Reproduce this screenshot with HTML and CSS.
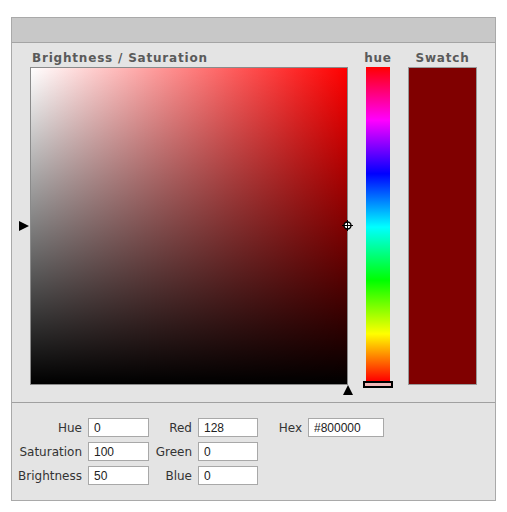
FILE: index.html
```html
<!DOCTYPE html>
<html lang="en">
<head>
    <meta charset="UTF-8">
    <meta name="viewport" content="width=device-width, initial-scale=1.0">
    <title>Color Picker</title>
    <link rel="stylesheet" href="styles.css">
</head>
<body>
    <div class="panel">
        <div class="titlebar"></div>

        <!-- Picker area -->
        <div class="picker">
            <div class="sb-col">
                <div class="col-label sb-label">Brightness / Saturation</div>
                <div class="sb-box">
                    <div class="sb-shade"></div>
                    <span class="arrow-left"></span>
                    <span class="arrow-up"></span>
                    <svg class="sb-marker" width="11" height="11" viewBox="0 0 11 11">
                        <circle cx="5.5" cy="5.5" r="3.5" fill="#fff" stroke="#000" stroke-width="1.4"/>
                        <line x1="5.5" y1="0" x2="5.5" y2="11" stroke="#000" stroke-width="1"/>
                        <line x1="0" y1="5.5" x2="11" y2="5.5" stroke="#000" stroke-width="1"/>
                    </svg>
                </div>
            </div>
            <div class="hue-col">
                <div class="col-label">hue</div>
                <div class="hue-bar">
                    <span class="hue-handle"></span>
                </div>
            </div>
            <div class="swatch-col">
                <div class="col-label">Swatch</div>
                <div class="swatch"></div>
            </div>
        </div>

        <!-- Values -->
        <div class="fields">
            <label>Hue</label><input type="text" value="0">
            <label>Red</label><input type="text" value="128">
            <label>Hex</label><input type="text" value="#800000">

            <label>Saturation</label><input type="text" value="100">
            <label>Green</label><input type="text" value="0">
            <span></span><span></span>

            <label>Brightness</label><input type="text" value="50">
            <label>Blue</label><input type="text" value="0">
            <span></span><span></span>
        </div>
    </div>
</body>
</html>
```

FILE: styles.css
```css
* {
    margin: 0;
    box-sizing: border-box;
}
body {
    background: #fff;
    font-family: "DejaVu Sans", sans-serif;
}

.panel {
    margin: 17px 0 0 11px;
    width: 485px;
    border: 1px solid #a9a9a9;
    background-color: #e4e4e4;
}

.titlebar {
    height: 25px;
    background-color: #c8c8c8;
    border-bottom: 1px solid #a4a4a4;
}

.picker {
    display: flex;
    padding: 8px 0 17px 18px;
    border-bottom: 1px solid #a0a0a0;
}

.col-label {
    height: 16px;
    font-size: 12px;
    font-weight: bold;
    line-height: 15px;
    color: #5a5a5a;
    text-align: center;
    letter-spacing: 0.8px;
}
.sb-label {
    text-align: left;
    padding-left: 2px;
}

.sb-col {
    width: 318px;
}
.sb-box {
    position: relative;
    width: 318px;
    height: 318px;
    border: 1px solid #8a8a8a;
    background: linear-gradient(to right, #fff, #f00);
}
.sb-shade {
    width: 100%;
    height: 100%;
    background: linear-gradient(to bottom, rgba(0,0,0,0), #000);
}

/* brightness pointer on the left edge */
.arrow-left {
    position: absolute;
    left: -12px;
    top: 153px;
    border-top: 5px solid transparent;
    border-bottom: 5px solid transparent;
    border-left: 10px solid #000;
}
/* saturation pointer under the box */
.arrow-up {
    position: absolute;
    right: -6px;
    bottom: -11px;
    border-left: 5px solid transparent;
    border-right: 5px solid transparent;
    border-bottom: 10px solid #000;
}
.sb-marker {
    position: absolute;
    right: -6px;
    top: 152px;
}

.hue-col {
    width: 28px;
    margin-left: 16px;
}
.hue-bar {
    position: relative;
    width: 24px;
    height: 314px;
    margin-left: 2px;
    background: linear-gradient(to bottom,
        #f00 0%, #f0f 17%, #00f 34%, #0ff 51%,
        #0f0 68%, #ff0 85%, #f00 100%);
}
.hue-handle {
    position: absolute;
    left: -3px;
    bottom: -7px;
    width: 30px;
    height: 7px;
    border: 2px solid #000;
    background-color: #f0b8b8;
}

.swatch-col {
    width: 69px;
    margin-left: 16px;
}
.swatch {
    height: 318px;
    background-color: #800000;
    border: 1px solid #999;
}

.fields {
    display: grid;
    grid-template-columns: 76px 61px 49px 60px 50px 76px;
    grid-auto-rows: 19px;
    row-gap: 5px;
    align-items: center;
    padding: 15px 0 15px 0;
}
.fields label {
    font-size: 12px;
    color: #333;
    text-align: right;
    padding-right: 6px;
}
.fields input {
    height: 19px;
    width: 100%;
    border: 1px solid #a8a8a8;
    background-color: #fff;
    padding: 0 5px;
    font-family: "Liberation Sans", Arial, sans-serif;
    font-size: 12px;
    color: #222;
    outline: none;
}
```
